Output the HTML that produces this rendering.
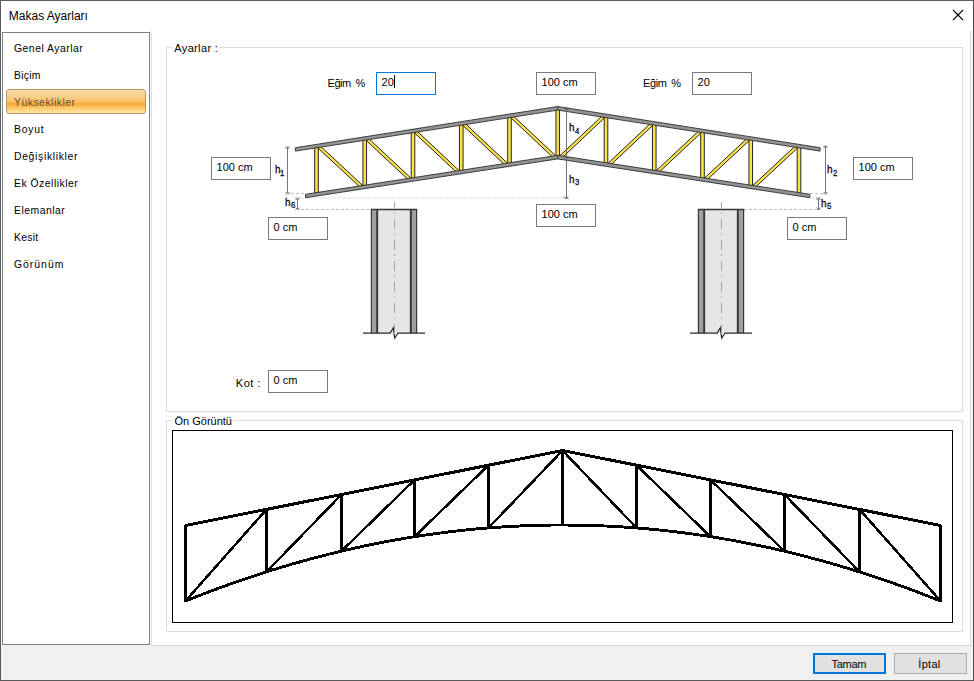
<!DOCTYPE html>
<html lang="tr"><head><meta charset="utf-8"><title>Makas Ayarları</title>
<style>
html,body{margin:0;padding:0;}
body{width:974px;height:681px;position:relative;overflow:hidden;background:#fff;font-family:"Liberation Sans",sans-serif;}
.a{position:absolute;}
.t{position:absolute;white-space:nowrap;}
.in{position:absolute;box-sizing:border-box;border:1px solid #7a7a7a;background:#fff;}
.gb{position:absolute;box-sizing:border-box;border:1px solid #dcdcdc;}
.btn{position:absolute;box-sizing:border-box;background:#e1e1e1;}
</style></head><body>

<div class="a" style="left:0;top:645px;width:974px;height:36px;background:#f0f0f0"></div>
<div class="a" style="left:970px;top:31px;width:1px;height:614px;background:#dedede"></div>
<div class="a" style="left:971px;top:31px;width:1px;height:614px;background:#f0f0f0"></div>
<div class="a" style="left:972px;top:31px;width:1px;height:649px;background:#f8f8f8"></div>
<span class="t" style="left:8.80px;top:10.34px;font-size:12px;line-height:12px;color:#000;letter-spacing:0px;font-weight:normal;">Makas Ayarları</span>
<div class="a" style="left:2px;top:32px;width:148px;height:613px;box-sizing:border-box;border:1px solid #7a8190;background:#fff"></div>
<div class="a" style="left:150px;top:31px;width:1px;height:614px;background:#f6f6f6"></div>
<div class="a" style="left:151px;top:31px;width:1px;height:615px;background:#e2e2e2"></div>
<div class="a" style="left:151px;top:645px;width:820px;height:1px;background:#dadada"></div>
<div class="a" style="left:6px;top:89px;width:140px;height:25px;box-sizing:border-box;border:1px solid #b9975f;border-radius:3px;background:linear-gradient(#fcdcac 0%,#fbcb80 35%,#fac068 52%,#f8a93c 58%,#f9ae42 64%,#fcc764 76%,#fee6a4 100%)"></div>
<span class="t" style="left:14.00px;top:43.70px;font-size:10.4px;line-height:10.4px;color:#000;letter-spacing:0.5px;font-weight:normal;">Genel Ayarlar</span>
<span class="t" style="left:14.00px;top:70.70px;font-size:10.4px;line-height:10.4px;color:#000;letter-spacing:0.25px;font-weight:normal;">Biçim</span>
<span class="t" style="left:14.00px;top:97.70px;font-size:10.4px;line-height:10.4px;color:#65533a;letter-spacing:0.5px;font-weight:normal;">Yükseklikler</span>
<span class="t" style="left:14.00px;top:124.70px;font-size:10.4px;line-height:10.4px;color:#000;letter-spacing:0.75px;font-weight:normal;">Boyut</span>
<span class="t" style="left:14.00px;top:151.70px;font-size:10.4px;line-height:10.4px;color:#000;letter-spacing:0.67px;font-weight:normal;">Değişiklikler</span>
<span class="t" style="left:14.00px;top:178.70px;font-size:10.4px;line-height:10.4px;color:#000;letter-spacing:0.5px;font-weight:normal;">Ek Özellikler</span>
<span class="t" style="left:14.00px;top:205.70px;font-size:10.4px;line-height:10.4px;color:#000;letter-spacing:0.5px;font-weight:normal;">Elemanlar</span>
<span class="t" style="left:14.00px;top:232.70px;font-size:10.4px;line-height:10.4px;color:#000;letter-spacing:0.25px;font-weight:normal;">Kesit</span>
<span class="t" style="left:14.00px;top:259.70px;font-size:10.4px;line-height:10.4px;color:#000;letter-spacing:1.0px;font-weight:normal;">Görünüm</span>
<div class="gb" style="left:166px;top:47px;width:797px;height:365px"></div>
<div class="a" style="left:172px;top:40px;width:47px;height:14px;background:#fff"></div>
<span class="t" style="left:174.30px;top:43.09px;font-size:11px;line-height:11px;color:#000;letter-spacing:0.35px;font-weight:normal;">Ayarlar :</span>
<div class="gb" style="left:166px;top:420px;width:797px;height:212px"></div>
<div class="a" style="left:172px;top:414px;width:61px;height:14px;background:#fff"></div>
<span class="t" style="left:174.50px;top:416.29px;font-size:11px;line-height:11px;color:#000;letter-spacing:0px;font-weight:normal;">Ön Görüntü</span>
<div class="a" style="left:172px;top:430px;width:781px;height:193px;box-sizing:border-box;border:1px solid #000;background:#fff"></div>
<div class="in" style="left:376px;top:72px;width:60px;height:23px;border-color:#0078d7"></div><span class="t" style="left:381.60px;top:77.29px;font-size:11px;line-height:11px;color:#000;letter-spacing:0px;font-weight:normal;">20</span>
<div class="a" style="left:394px;top:75px;width:1px;height:13px;background:#000"></div>
<div class="in" style="left:536px;top:72px;width:60px;height:23px;border-color:#7a7a7a"></div><span class="t" style="left:541.60px;top:77.29px;font-size:11px;line-height:11px;color:#000;letter-spacing:0px;font-weight:normal;">100 cm</span>
<div class="in" style="left:692px;top:72px;width:60px;height:23px;border-color:#7a7a7a"></div><span class="t" style="left:697.60px;top:77.29px;font-size:11px;line-height:11px;color:#000;letter-spacing:0px;font-weight:normal;">20</span>
<div class="in" style="left:211px;top:157px;width:60px;height:23px;border-color:#7a7a7a"></div><span class="t" style="left:216.60px;top:162.29px;font-size:11px;line-height:11px;color:#000;letter-spacing:0px;font-weight:normal;">100 cm</span>
<div class="in" style="left:853px;top:157px;width:60px;height:23px;border-color:#7a7a7a"></div><span class="t" style="left:858.60px;top:162.29px;font-size:11px;line-height:11px;color:#000;letter-spacing:0px;font-weight:normal;">100 cm</span>
<div class="in" style="left:268px;top:217px;width:60px;height:23px;border-color:#7a7a7a"></div><span class="t" style="left:273.60px;top:222.29px;font-size:11px;line-height:11px;color:#000;letter-spacing:0px;font-weight:normal;">0 cm</span>
<div class="in" style="left:787px;top:217px;width:60px;height:23px;border-color:#7a7a7a"></div><span class="t" style="left:792.60px;top:222.29px;font-size:11px;line-height:11px;color:#000;letter-spacing:0px;font-weight:normal;">0 cm</span>
<div class="in" style="left:536px;top:204px;width:60px;height:23px;border-color:#7a7a7a"></div><span class="t" style="left:541.60px;top:209.29px;font-size:11px;line-height:11px;color:#000;letter-spacing:0px;font-weight:normal;">100 cm</span>
<div class="in" style="left:268px;top:370px;width:60px;height:23px;border-color:#7a7a7a"></div><span class="t" style="left:273.60px;top:375.29px;font-size:11px;line-height:11px;color:#000;letter-spacing:0px;font-weight:normal;">0 cm</span>
<span class="t" style="left:327.50px;top:78.09px;font-size:11px;line-height:11px;color:#000;letter-spacing:-0.45px;font-weight:normal;word-spacing:2.2px;">Eğim %</span>
<span class="t" style="left:643.10px;top:78.09px;font-size:11px;line-height:11px;color:#000;letter-spacing:-0.45px;font-weight:normal;word-spacing:2.2px;">Eğim %</span>
<span class="t" style="left:235.80px;top:378.29px;font-size:11px;line-height:11px;color:#000;letter-spacing:0.5px;font-weight:normal;">Kot :</span>
<svg class="a" style="left:0;top:0" width="974" height="681" viewBox="0 0 974 681">
<path d="M953 10 L963 20 M963 10 L953 20" stroke="#000" stroke-width="1.1" fill="none"/>
<line x1="287.5" y1="147" x2="287.5" y2="194" stroke="#777" stroke-width="1"/>
<path d="M285.7 149.0 L287.5 147 L289.3 149.0" stroke="#555" stroke-width="0.8" fill="none"/><line x1="285.0" y1="147" x2="290.0" y2="147" stroke="#888" stroke-width="0.7"/>
<path d="M285.7 192.0 L287.5 194 L289.3 192.0" stroke="#555" stroke-width="0.8" fill="none"/><line x1="285.0" y1="194" x2="290.0" y2="194" stroke="#888" stroke-width="0.7"/>
<line x1="286" y1="193.5" x2="306" y2="193.5" stroke="#bdbdbd" stroke-width="1" stroke-dasharray="3 2"/>
<line x1="297.5" y1="198" x2="297.5" y2="209.5" stroke="#777" stroke-width="1"/>
<path d="M295.7 200.0 L297.5 198 L299.3 200.0" stroke="#555" stroke-width="0.8" fill="none"/><line x1="295.0" y1="198" x2="300.0" y2="198" stroke="#888" stroke-width="0.7"/>
<path d="M295.7 207.5 L297.5 209.5 L299.3 207.5" stroke="#555" stroke-width="0.8" fill="none"/><line x1="295.0" y1="209.5" x2="300.0" y2="209.5" stroke="#888" stroke-width="0.7"/>
<line x1="296" y1="198" x2="567" y2="198" stroke="#cccccc" stroke-width="1" stroke-dasharray="1.5 1.5"/>
<line x1="296" y1="209.5" x2="371" y2="209.5" stroke="#bdbdbd" stroke-width="1" stroke-dasharray="3 2"/>
<line x1="825.5" y1="146" x2="825.5" y2="194" stroke="#777" stroke-width="1"/>
<path d="M823.7 148.0 L825.5 146 L827.3 148.0" stroke="#555" stroke-width="0.8" fill="none"/><line x1="823.0" y1="146" x2="828.0" y2="146" stroke="#888" stroke-width="0.7"/>
<path d="M823.7 192.0 L825.5 194 L827.3 192.0" stroke="#555" stroke-width="0.8" fill="none"/><line x1="823.0" y1="194" x2="828.0" y2="194" stroke="#888" stroke-width="0.7"/>
<line x1="810" y1="193.5" x2="828" y2="193.5" stroke="#bdbdbd" stroke-width="1" stroke-dasharray="3 2"/>
<line x1="818.5" y1="198" x2="818.5" y2="209.5" stroke="#777" stroke-width="1"/>
<path d="M816.7 200.0 L818.5 198 L820.3 200.0" stroke="#555" stroke-width="0.8" fill="none"/><line x1="816.0" y1="198" x2="821.0" y2="198" stroke="#888" stroke-width="0.7"/>
<path d="M816.7 207.5 L818.5 209.5 L820.3 207.5" stroke="#555" stroke-width="0.8" fill="none"/><line x1="816.0" y1="209.5" x2="821.0" y2="209.5" stroke="#888" stroke-width="0.7"/>
<line x1="812" y1="198" x2="821" y2="198" stroke="#c4c4c4" stroke-width="1" stroke-dasharray="2 2"/>
<line x1="744" y1="209.5" x2="820" y2="209.5" stroke="#bdbdbd" stroke-width="1" stroke-dasharray="3 2"/>
<polygon points="555.95,109.40 555.95,156.20 559.55,156.20 559.55,109.40" fill="#fbe24a" stroke="#262626" stroke-width="1.0" stroke-linejoin="miter"/>
<polygon points="507.70,116.94 507.70,163.63 511.30,163.63 511.30,116.94" fill="#fbe24a" stroke="#262626" stroke-width="1.0" stroke-linejoin="miter"/>
<polygon points="459.45,124.48 459.45,171.05 463.05,171.05 463.05,124.48" fill="#fbe24a" stroke="#262626" stroke-width="1.0" stroke-linejoin="miter"/>
<polygon points="411.20,132.02 411.20,178.48 414.80,178.48 414.80,132.02" fill="#fbe24a" stroke="#262626" stroke-width="1.0" stroke-linejoin="miter"/>
<polygon points="362.95,139.57 362.95,185.90 366.55,185.90 366.55,139.57" fill="#fbe24a" stroke="#262626" stroke-width="1.0" stroke-linejoin="miter"/>
<polygon points="314.70,147.11 314.70,193.33 318.30,193.33 318.30,147.11" fill="#fbe24a" stroke="#262626" stroke-width="1.0" stroke-linejoin="miter"/>
<polygon points="511.27,118.10 553.42,157.80 555.48,155.62 513.33,115.91" fill="#fbe24a" stroke="#222" stroke-width="1.0" stroke-linejoin="miter"/>
<polygon points="463.02,125.64 505.17,165.23 507.23,163.04 465.08,123.45" fill="#fbe24a" stroke="#222" stroke-width="1.0" stroke-linejoin="miter"/>
<polygon points="414.77,133.18 456.92,172.65 458.98,170.46 416.83,130.99" fill="#fbe24a" stroke="#222" stroke-width="1.0" stroke-linejoin="miter"/>
<polygon points="366.53,140.72 408.68,180.08 410.72,177.89 368.57,138.53" fill="#fbe24a" stroke="#222" stroke-width="1.0" stroke-linejoin="miter"/>
<polygon points="318.28,148.27 360.43,187.51 362.47,185.31 320.32,146.07" fill="#fbe24a" stroke="#222" stroke-width="1.0" stroke-linejoin="miter"/>
<polygon points="604.20,116.94 604.20,163.63 607.80,163.63 607.80,116.94" fill="#fbe24a" stroke="#262626" stroke-width="1.0" stroke-linejoin="miter"/>
<polygon points="652.45,124.48 652.45,171.05 656.05,171.05 656.05,124.48" fill="#fbe24a" stroke="#262626" stroke-width="1.0" stroke-linejoin="miter"/>
<polygon points="700.70,132.02 700.70,178.48 704.30,178.48 704.30,132.02" fill="#fbe24a" stroke="#262626" stroke-width="1.0" stroke-linejoin="miter"/>
<polygon points="748.95,139.57 748.95,185.90 752.55,185.90 752.55,139.57" fill="#fbe24a" stroke="#262626" stroke-width="1.0" stroke-linejoin="miter"/>
<polygon points="797.20,147.11 797.20,193.33 800.80,193.33 800.80,147.11" fill="#fbe24a" stroke="#262626" stroke-width="1.0" stroke-linejoin="miter"/>
<polygon points="602.17,115.91 560.02,155.62 562.08,157.80 604.23,118.10" fill="#fbe24a" stroke="#222" stroke-width="1.0" stroke-linejoin="miter"/>
<polygon points="650.42,123.45 608.27,163.04 610.33,165.23 652.48,125.64" fill="#fbe24a" stroke="#222" stroke-width="1.0" stroke-linejoin="miter"/>
<polygon points="698.67,130.99 656.52,170.46 658.58,172.65 700.73,133.18" fill="#fbe24a" stroke="#222" stroke-width="1.0" stroke-linejoin="miter"/>
<polygon points="746.93,138.53 704.78,177.89 706.82,180.08 748.97,140.72" fill="#fbe24a" stroke="#222" stroke-width="1.0" stroke-linejoin="miter"/>
<polygon points="795.18,146.07 753.03,185.31 755.07,187.51 797.22,148.27" fill="#fbe24a" stroke="#222" stroke-width="1.0" stroke-linejoin="miter"/>
<polygon points="295.40,147.71 557.75,106.50 820.10,147.71 820.10,151.11 557.75,110.10 295.40,151.11" fill="#949494" stroke="#2e2e2e" stroke-width="0.9" stroke-linejoin="miter"/>
<polygon points="305.60,194.31 557.75,155.30 809.90,194.31 809.90,197.71 557.75,158.90 305.60,197.71" fill="#949494" stroke="#2e2e2e" stroke-width="0.9" stroke-linejoin="miter"/>
<line x1="557.75" y1="106.60000000000001" x2="557.75" y2="110.2" stroke="#2e2e2e" stroke-width="0.8"/>
<line x1="557.75" y1="155.39999999999998" x2="557.75" y2="159.0" stroke="#2e2e2e" stroke-width="0.8"/>
<line x1="566.5" y1="107.5" x2="566.5" y2="198.5" stroke="#707070" stroke-width="1"/>
<path d="M564.7 196.5 L566.5 198.5 L568.3 196.5" stroke="#555" stroke-width="0.8" fill="none"/><line x1="564.0" y1="198.5" x2="569.0" y2="198.5" stroke="#888" stroke-width="0.7"/>
<line x1="564.5" y1="108.6" x2="568.5" y2="109.4" stroke="#444" stroke-width="0.7"/>
<line x1="564.5" y1="157.0" x2="568.5" y2="157.8" stroke="#444" stroke-width="0.7"/>
<rect x="371" y="209.5" width="46" height="123.5" fill="#e6e6e6"/><rect x="371" y="209.5" width="6" height="123.5" fill="#a0a0a0"/><rect x="411" y="209.5" width="6" height="123.5" fill="#a0a0a0"/><line x1="371.4" y1="209.5" x2="371.4" y2="333" stroke="#363636" stroke-width="1.2"/><line x1="377.2" y1="209.5" x2="377.2" y2="333" stroke="#363636" stroke-width="1.9"/><line x1="410.8" y1="209.5" x2="410.8" y2="333" stroke="#363636" stroke-width="1.9"/><line x1="416.6" y1="209.5" x2="416.6" y2="333" stroke="#363636" stroke-width="1.2"/><line x1="370.8" y1="209.5" x2="417.2" y2="209.5" stroke="#363636" stroke-width="1.4"/><path d="M363 333 L390.2 333 L393.3 327.8 L394.7 338.2 L398.0 333 L425 333" stroke="#2a2a2a" stroke-width="1.25" fill="none" stroke-linejoin="miter"/><line x1="394.5" y1="201.5" x2="394.5" y2="340" stroke="#a4a4a4" stroke-width="1" stroke-dasharray="10 4.5 1.5 5" stroke-dashoffset="3.5"/>
<rect x="698" y="209.5" width="46" height="123.5" fill="#e6e6e6"/><rect x="698" y="209.5" width="6" height="123.5" fill="#a0a0a0"/><rect x="738" y="209.5" width="6" height="123.5" fill="#a0a0a0"/><line x1="698.4" y1="209.5" x2="698.4" y2="333" stroke="#363636" stroke-width="1.2"/><line x1="704.2" y1="209.5" x2="704.2" y2="333" stroke="#363636" stroke-width="1.9"/><line x1="737.8" y1="209.5" x2="737.8" y2="333" stroke="#363636" stroke-width="1.9"/><line x1="743.6" y1="209.5" x2="743.6" y2="333" stroke="#363636" stroke-width="1.2"/><line x1="697.8" y1="209.5" x2="744.2" y2="209.5" stroke="#363636" stroke-width="1.4"/><path d="M690 333 L717.2 333 L720.3 327.8 L721.7 338.2 L725.0 333 L752 333" stroke="#2a2a2a" stroke-width="1.25" fill="none" stroke-linejoin="miter"/><line x1="721.5" y1="201.5" x2="721.5" y2="340" stroke="#a4a4a4" stroke-width="1" stroke-dasharray="10 4.5 1.5 5" stroke-dashoffset="3.5"/>
<g shape-rendering="crispEdges" stroke="#000" fill="none">
<polyline points="185.5,601.0 194.9,597.2 204.4,593.6 213.8,590.0 223.2,586.5 232.7,583.2 242.1,579.9 251.6,576.7 261.0,573.6 270.4,570.6 279.9,567.7 289.3,564.9 298.8,562.2 308.2,559.6 317.6,557.1 327.1,554.6 336.5,552.3 345.9,550.1 355.4,547.9 364.8,545.9 374.2,543.9 383.7,542.1 393.1,540.3 402.6,538.7 412.0,537.1 421.4,535.6 430.9,534.3 440.3,533.0 449.8,531.8 459.2,530.7 468.6,529.7 478.1,528.8 487.5,528.0 496.9,527.3 506.4,526.7 515.8,526.2 525.2,525.7 534.7,525.4 544.1,525.2 553.6,525.0 563.0,525.0 572.4,525.1 581.9,525.2 591.3,525.4 600.8,525.8 610.2,526.2 619.6,526.7 629.1,527.4 638.5,528.1 647.9,528.9 657.4,529.8 666.8,530.8 676.2,531.9 685.7,533.1 695.1,534.4 704.6,535.7 714.0,537.2 723.4,538.8 732.9,540.4 742.3,542.2 751.8,544.1 761.2,546.0 770.6,548.0 780.1,550.2 789.5,552.4 798.9,554.7 808.4,557.2 817.8,559.7 827.2,562.3 836.7,565.0 846.1,567.8 855.6,570.7 865.0,573.7 874.4,576.8 883.9,579.9 893.3,583.2 902.8,586.6 912.2,590.0 921.6,593.6 931.1,597.3 940.5,601.0" stroke-width="2.9" stroke-linejoin="round"/>
<polyline points="185.5,525.5 562.5,450.5 940.5,525.5" stroke-width="3" stroke-linejoin="miter"/>
<line x1="562.5" y1="449.5" x2="562.5" y2="526.0" stroke-width="3"/>
<line x1="488.5" y1="464.2" x2="488.5" y2="528.9" stroke-width="3"/>
<line x1="414.5" y1="478.9" x2="414.5" y2="537.7" stroke-width="3"/>
<line x1="341.5" y1="493.5" x2="341.5" y2="552.1" stroke-width="3"/>
<line x1="266.5" y1="508.4" x2="266.5" y2="572.9" stroke-width="3"/>
<line x1="185.5" y1="524.5" x2="185.5" y2="602.0" stroke-width="3"/>
<line x1="562.5" y1="450.5" x2="488.5" y2="527.9" stroke-width="2.5"/>
<line x1="488.5" y1="465.2" x2="414.5" y2="536.7" stroke-width="2.5"/>
<line x1="414.5" y1="479.9" x2="341.5" y2="551.1" stroke-width="2.5"/>
<line x1="341.5" y1="494.5" x2="266.5" y2="571.9" stroke-width="2.5"/>
<line x1="266.5" y1="509.4" x2="185.5" y2="601.0" stroke-width="2.5"/>
<line x1="636.5" y1="464.2" x2="636.5" y2="528.9" stroke-width="3"/>
<line x1="710.5" y1="478.9" x2="710.5" y2="537.7" stroke-width="3"/>
<line x1="784.5" y1="493.5" x2="784.5" y2="552.2" stroke-width="3"/>
<line x1="859.5" y1="508.4" x2="859.5" y2="572.9" stroke-width="3"/>
<line x1="940.5" y1="524.5" x2="940.5" y2="602.0" stroke-width="3"/>
<line x1="562.5" y1="450.5" x2="636.5" y2="527.9" stroke-width="2.5"/>
<line x1="636.5" y1="465.2" x2="710.5" y2="536.7" stroke-width="2.5"/>
<line x1="710.5" y1="479.9" x2="784.5" y2="551.2" stroke-width="2.5"/>
<line x1="784.5" y1="494.5" x2="859.5" y2="571.9" stroke-width="2.5"/>
<line x1="859.5" y1="509.4" x2="940.5" y2="601.0" stroke-width="2.5"/>
</g>
</svg>
<span class="t" style="left:274.90px;top:164.39px;font-size:11px;line-height:11px;color:#111;letter-spacing:0px;font-weight:normal;transform:scaleX(0.9);transform-origin:0 0;-webkit-text-stroke:0.35px #111;">h</span><span class="t" style="left:280.40px;top:168.59px;font-size:8.4px;line-height:8.4px;color:#111;letter-spacing:0px;font-weight:normal;transform:scaleX(0.92);transform-origin:0 0;-webkit-text-stroke:0.3px #111;">1</span>
<span class="t" style="left:285.30px;top:197.09px;font-size:11px;line-height:11px;color:#111;letter-spacing:0px;font-weight:normal;transform:scaleX(0.9);transform-origin:0 0;-webkit-text-stroke:0.35px #111;">h</span><span class="t" style="left:290.80px;top:201.29px;font-size:8.4px;line-height:8.4px;color:#111;letter-spacing:0px;font-weight:normal;transform:scaleX(0.92);transform-origin:0 0;-webkit-text-stroke:0.3px #111;">6</span>
<span class="t" style="left:569.30px;top:122.39px;font-size:11px;line-height:11px;color:#111;letter-spacing:0px;font-weight:normal;transform:scaleX(0.9);transform-origin:0 0;-webkit-text-stroke:0.35px #111;">h</span><span class="t" style="left:574.80px;top:126.59px;font-size:8.4px;line-height:8.4px;color:#111;letter-spacing:0px;font-weight:normal;transform:scaleX(0.92);transform-origin:0 0;-webkit-text-stroke:0.3px #111;">4</span>
<span class="t" style="left:569.30px;top:174.19px;font-size:11px;line-height:11px;color:#111;letter-spacing:0px;font-weight:normal;transform:scaleX(0.9);transform-origin:0 0;-webkit-text-stroke:0.35px #111;">h</span><span class="t" style="left:574.80px;top:178.39px;font-size:8.4px;line-height:8.4px;color:#111;letter-spacing:0px;font-weight:normal;transform:scaleX(0.92);transform-origin:0 0;-webkit-text-stroke:0.3px #111;">3</span>
<span class="t" style="left:827.00px;top:164.39px;font-size:11px;line-height:11px;color:#111;letter-spacing:0px;font-weight:normal;transform:scaleX(0.9);transform-origin:0 0;-webkit-text-stroke:0.35px #111;">h</span><span class="t" style="left:832.50px;top:168.59px;font-size:8.4px;line-height:8.4px;color:#111;letter-spacing:0px;font-weight:normal;transform:scaleX(0.92);transform-origin:0 0;-webkit-text-stroke:0.3px #111;">2</span>
<span class="t" style="left:821.00px;top:197.99px;font-size:11px;line-height:11px;color:#111;letter-spacing:0px;font-weight:normal;transform:scaleX(0.9);transform-origin:0 0;-webkit-text-stroke:0.35px #111;">h</span><span class="t" style="left:826.50px;top:202.19px;font-size:8.4px;line-height:8.4px;color:#111;letter-spacing:0px;font-weight:normal;transform:scaleX(0.92);transform-origin:0 0;-webkit-text-stroke:0.3px #111;">5</span>
<div class="btn" style="left:813px;top:653px;width:73px;height:21px;border:2px solid #0078d7"></div>
<div class="btn" style="left:894px;top:653px;width:73px;height:21px;border:1px solid #adadad"></div>
<span class="t" style="left:831.60px;top:658.99px;font-size:11px;line-height:11px;color:#000;letter-spacing:-0.3px;font-weight:normal;">Tamam</span>
<span class="t" style="left:918.30px;top:658.99px;font-size:11px;line-height:11px;color:#000;letter-spacing:0.3px;font-weight:normal;">İptal</span>
<div class="a" style="left:0;top:0;width:974px;height:1px;background:#5a5a5a"></div>
<div class="a" style="left:0;top:680px;width:974px;height:1px;background:#5a5a5a"></div>
<div class="a" style="left:0;top:0;width:1px;height:681px;background:#5a5a5a"></div>
<div class="a" style="left:973px;top:0;width:1px;height:681px;background:#4a4a4a"></div>
</body></html>
